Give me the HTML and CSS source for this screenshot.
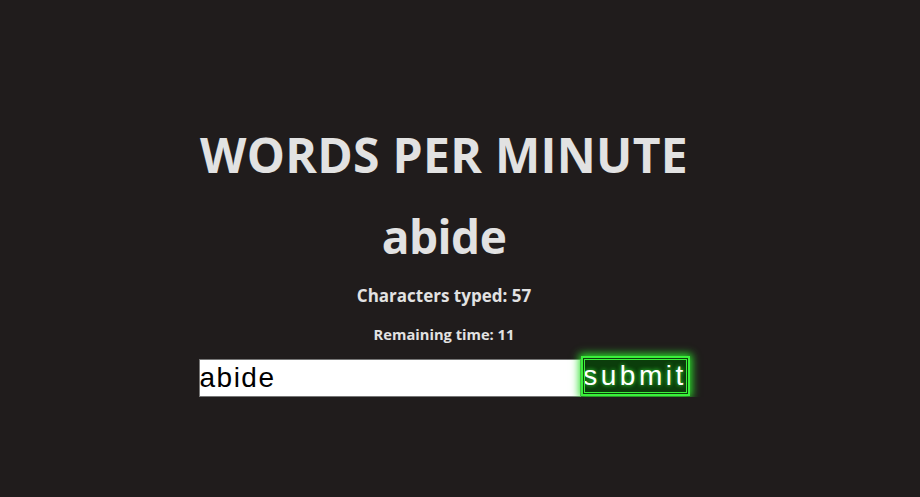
FILE: index.html
```html
<!DOCTYPE html>
<html lang="en">
<head>
<meta charset="utf-8">
<title>Words Per Minute</title>
<link rel="stylesheet" href="styles.css">
</head>
<body>
<main class="app">
  <h1 class="title">WORDS PER MINUTE</h1>
  <h1 class="word">abide</h1>
  <h3 class="stat stat-chars">Characters typed: 57</h3>
  <h4 class="stat stat-time">Remaining time: 11</h4>
  <form class="entry">
    <input class="entry-input" type="text" value="abide">
    <button class="entry-submit" type="button">submit</button>
  </form>
</main>
</body>
</html>
```

FILE: styles.css
```css
html, body {
  margin: 0;
  padding: 0;
  background: #201c1c;
}

body {
  font-family: "Open Sans", "Noto Sans", sans-serif;
  color: #e2e2e2;
}

.app {
  width: 872px;
  margin-left: 8px;
  padding-top: 127px;
  display: flex;
  flex-direction: column;
  align-items: center;
  text-align: center;
}

.title {
  margin: 0;
  font-size: 48px;
  font-weight: 700;
  line-height: 56px;
  letter-spacing: 0.3px;
}

.word {
  margin: 25px 0 0;
  font-size: 46px;
  font-weight: 700;
  line-height: 56px;
  letter-spacing: -0.5px;
}

.stat {
  margin: 0;
  font-weight: 700;
}

.stat-chars {
  margin-top: 21px;
  font-size: 17px;
  line-height: 22px;
}

.stat-time {
  margin-top: 17px;
  font-size: 14.7px;
  line-height: 20px;
}

.entry {
  margin-top: 12px;
  display: flex;
  align-items: flex-end;
}

.entry-input {
  box-sizing: border-box;
  width: 382px;
  height: 38px;
  margin: 0;
  padding: 0 0 0 0;
  border: 1px solid #767676;
  background: #ffffff;
  color: #000000;
  font-family: "Liberation Sans", Arial, sans-serif;
  font-size: 28px;
  letter-spacing: 1.5px;
  outline: none;
}

.entry-submit {
  box-sizing: border-box;
  width: 109px;
  height: 40px;
  margin: 0 0 1px;
  padding: 0;
  border: 2px solid #3bf03b;
  outline: 1px solid #3bf03b;
  outline-offset: -4px;
  background: #0b3d0b;
  color: #ffffff;
  font-family: "Liberation Sans", Arial, sans-serif;
  font-size: 28px;
  letter-spacing: 3.5px;
  text-indent: 0;
  text-shadow: 0 0 4px #3bf03b;
  box-shadow: 0 0 8px 2px #2be02b;
}
```
